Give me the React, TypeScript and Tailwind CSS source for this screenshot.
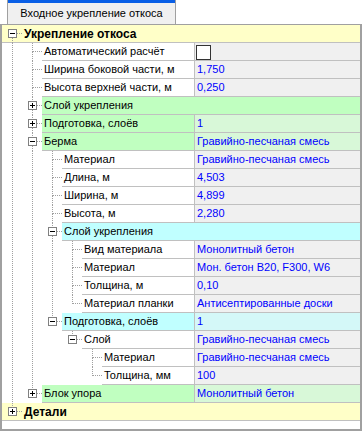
import React from "react";

type Kind = "root" | "green" | "cyan" | "plain";

type TNode = {
  name: string;
  value?: string;
  checkbox?: boolean;
  kind?: Kind;
  expanded?: boolean;
  children?: TNode[];
  collapsedChildren?: boolean;
};

const tree: TNode[] = [
  {
    name: "Укрепление откоса",
    kind: "root",
    expanded: true,
    children: [
      { name: "Автоматический расчёт", checkbox: true },
      { name: "Ширина боковой части, м", value: "1,750" },
      { name: "Высота верхней части, м", value: "0,250" },
      { name: "Слой укрепления", kind: "green", collapsedChildren: true },
      { name: "Подготовка, слоёв", kind: "green", value: "1", collapsedChildren: true },
      {
        name: "Берма",
        kind: "green",
        value: "Гравийно-песчаная смесь",
        expanded: true,
        children: [
          { name: "Материал", value: "Гравийно-песчаная смесь" },
          { name: "Длина, м", value: "4,503" },
          { name: "Ширина, м", value: "4,899" },
          { name: "Высота, м", value: "2,280" },
          {
            name: "Слой укрепления",
            kind: "cyan",
            expanded: true,
            children: [
              { name: "Вид материала", value: "Монолитный бетон" },
              { name: "Материал", value: "Мон. бетон B20, F300, W6" },
              { name: "Толщина, м", value: "0,10" },
              { name: "Материал планки", value: "Антисептированные доски" },
            ],
          },
          {
            name: "Подготовка, слоёв",
            kind: "cyan",
            value: "1",
            expanded: true,
            children: [
              {
                name: "Слой",
                value: "Гравийно-песчаная смесь",
                expanded: true,
                children: [
                  { name: "Материал", value: "Гравийно-песчаная смесь" },
                  { name: "Толщина, мм", value: "100" },
                ],
              },
            ],
          },
        ],
      },
      { name: "Блок упора", kind: "green", value: "Монолитный бетон", collapsedChildren: true },
    ],
  },
  { name: "Детали", kind: "root", collapsedChildren: true },
];

type Row = {
  node: TNode;
  depth: number;
  ancestorsLast: boolean[];
  isLast: boolean;
  isFirstRoot: boolean;
};

function flatten(nodes: TNode[], depth: number, ancestorsLast: boolean[], out: Row[]) {
  nodes.forEach((n, i) => {
    const isLast = i === nodes.length - 1;
    out.push({ node: n, depth, ancestorsLast, isLast, isFirstRoot: depth === 0 && i === 0 });
    if (n.expanded && n.children) {
      flatten(n.children, depth + 1, [...ancestorsLast, isLast], out);
    }
  });
  return out;
}

const rows = flatten(tree, 0, [], []);

const LINE = "#a0a0a0";

function Cell({
  mode,
  top,
  bottom,
  box,
  expanded,
}: {
  mode: "blank" | "pipe" | "conn";
  top?: boolean;
  bottom?: boolean;
  box?: boolean;
  expanded?: boolean;
}) {
  return (
    <svg width={20} height={18} className="block shrink-0" shapeRendering="crispEdges">
      {mode === "pipe" && (
        <line x1={10.5} y1={0} x2={10.5} y2={18} stroke={LINE} strokeDasharray="1 1" />
      )}
      {mode === "conn" && (
        <>
          {top && <line x1={10.5} y1={0} x2={10.5} y2={9} stroke={LINE} strokeDasharray="1 1" />}
          {bottom && <line x1={10.5} y1={9} x2={10.5} y2={18} stroke={LINE} strokeDasharray="1 1" />}
          <line x1={11} y1={8.5} x2={20} y2={8.5} stroke={LINE} strokeDasharray="1 1" />
          {box && (
            <>
              <rect x={6.5} y={4.5} width={8} height={8} fill="#ffffff" stroke="#808080" />
              <line x1={8} y1={8.5} x2={13} y2={8.5} stroke="#000000" />
              {!expanded && <line x1={10.5} y1={6} x2={10.5} y2={11} stroke="#000000" />}
            </>
          )}
        </>
      )}
    </svg>
  );
}

const nameBg: Record<Kind, string> = {
  root: "bg-[#ffffc8]",
  green: "bg-[#c0ffc0]",
  cyan: "bg-[#c0ffff]",
  plain: "bg-white",
};

const valueBg: Record<Kind, string> = {
  root: "bg-[#ffffc8]",
  green: "bg-[#d8f8d8]",
  cyan: "bg-[#d4f8f8]",
  plain: "bg-[#f0f0f0]",
};

function TreeRow({ row }: { row: Row }) {
  const { node, depth, ancestorsLast, isLast, isFirstRoot } = row;
  const kind: Kind = node.kind ?? "plain";
  const hasKids = !!node.children || !!node.collapsedChildren;
  const isRoot = kind === "root";
  const hasValue = node.value !== undefined || node.checkbox;

  const cells: React.ReactNode[] = [];
  for (let k = 0; k < depth; k++) {
    cells.push(<Cell key={k} mode={ancestorsLast[k] ? "blank" : "pipe"} />);
  }
  cells.push(
    <Cell
      key="c"
      mode="conn"
      top={!isFirstRoot}
      bottom={!isLast}
      box={hasKids}
      expanded={!!node.expanded}
    />
  );

  return (
    <div className={`flex h-[18px] ${isRoot ? "bg-[#ffffc8] border-b border-[#c0c0c0]" : ""}`}>
      <div className="flex w-[192px] shrink-0">
        {cells}
        <div
          className={`flex-1 min-w-0 flex items-center pl-[2px] whitespace-nowrap ${
            isRoot ? "font-bold text-[12px] text-black" : `border-b border-[#c0c0c0] text-[11px] text-black ${nameBg[kind]}`
          }`}
        >
          {node.name}
        </div>
      </div>
      {hasValue ? (
        <div
          className={`flex-1 min-w-0 flex border-l border-b border-[#c0c0c0] pl-[1px] whitespace-nowrap text-[11px] text-[#0000ff] ${valueBg[kind]} ${
            node.checkbox ? "items-start pt-[2px]" : "items-center pl-[2px]"
          }`}
        >
          {node.checkbox ? (
            <div className="w-[15px] h-[15px] border border-[#333333] bg-white" />
          ) : (
            node.value
          )}
        </div>
      ) : (
        <div className={`flex-1 ${isRoot ? "" : `border-b border-[#c0c0c0] ${nameBg[kind]}`}`} />
      )}
    </div>
  );
}

export default function App() {
  return (
    <div
      className="w-[362px] h-[431px] bg-white flex flex-col overflow-hidden"
      style={{ fontFamily: '"Liberation Sans", Arial, sans-serif' }}
    >
      <div className="flex h-[24px] shrink-0 pl-[7px]">
        <div className="w-[169px] h-[24px] flex flex-col border-l border-r border-[#a0a0a0] bg-[#f0f0f0]">
          <div className="h-[3px] bg-[#0a5fe6] shrink-0" />
          <div className="flex-1 flex items-center justify-center text-[11px] text-black whitespace-nowrap pb-[1px]">
            Входное укрепление откоса
          </div>
        </div>
      </div>
      <div className="flex-1 border-t border-x-2 border-b-2 border-[#a0a0a0] bg-white flex flex-col">
        {rows.map((r, i) => (
          <TreeRow key={i} row={r} />
        ))}
      </div>
    </div>
  );
}
